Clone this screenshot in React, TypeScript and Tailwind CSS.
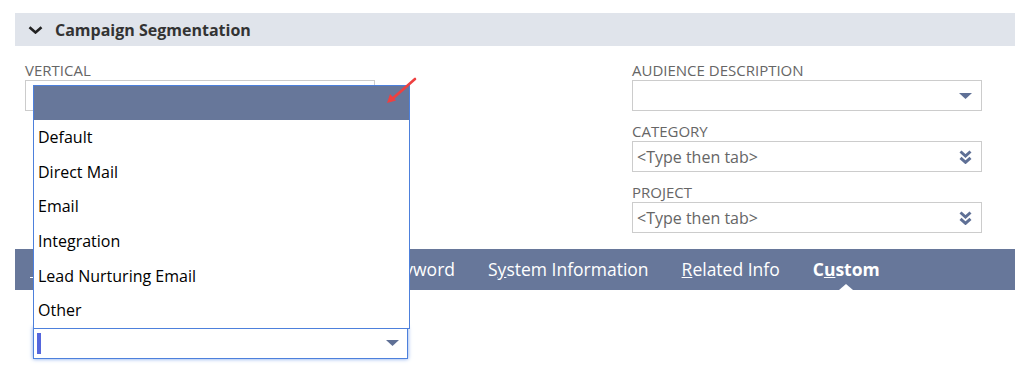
import React from 'react';

const font = "font-['Open_Sans',sans-serif]";

const Triangle = () => (
    <svg width="13" height="6" viewBox="0 0 13 6" className="shrink-0">
        <path d="M0 0 H13 L6.5 6 Z" fill="#5f7096" />
    </svg>
);

const DoubleChevron = () => (
    <svg width="13" height="14" viewBox="0 0 13 14" className="shrink-0">
        <path d="M1.5 1.5 L6.5 6 L11.5 1.5" fill="none" stroke="#5f7096" strokeWidth="3" />
        <path d="M1.5 7.8 L6.5 12.3 L11.5 7.8" fill="none" stroke="#5f7096" strokeWidth="3" />
    </svg>
);

const Field = ({ label, placeholder, icon, first }: { label: string; placeholder?: string; icon: 'tri' | 'dbl'; first?: boolean }) => (
    <div className={first ? '' : 'mt-[11px]'}>
        <div className="text-[15px] leading-[19px] text-[#666] uppercase">{label}</div>
        <div className="h-[31px] w-[350px] border border-[#cccccc] flex items-center justify-between pl-[4px] pr-[9px]">
            <span className="text-[16px] text-[#666]">{placeholder}</span>
            {icon === 'tri' ? <Triangle /> : <DoubleChevron />}
        </div>
    </div>
);

const options = ['Default', 'Direct Mail', 'Email', 'Integration', 'Lead Nurturing Email', 'Other'];

export default function App() {
    return (
        <div className={`w-[1015px] h-[378px] bg-white pt-[13px] pl-[15px] relative overflow-hidden ${font}`}>
            {/* section header */}
            <div className="h-[33px] bg-[#e0e4eb] flex items-center pl-[13px] gap-[12px]">
                <svg width="15" height="8" viewBox="0 0 15 8">
                    <path d="M1.5 1.2 L7.5 6.5 L13.5 1.2" fill="none" stroke="#222" strokeWidth="2.6" />
                </svg>
                <span className="text-[16px] font-bold text-[#333]">Campaign Segmentation</span>
            </div>

            {/* fields */}
            <div className="flex pl-[10px] pt-[15px]">
                <div className="w-[350px]">
                    <div className="text-[15px] leading-[19px] text-[#666]">VERTICAL</div>
                    <div className="h-[31px] w-[350px] border border-[#cccccc]" />
                </div>
                <div className="ml-[257px] w-[350px]">
                    <Field label="Audience Description" icon="tri" first />
                    <Field label="Category" placeholder="<Type then tab>" icon="dbl" />
                    <Field label="Project" placeholder="<Type then tab>" icon="dbl" />
                </div>
            </div>

            {/* subtabs */}
            <div className="mt-[16px] h-[41px] w-[1000px] bg-[#67779a] flex items-center text-white text-[17.5px] pl-[15px]">
                <span className="w-[6px] h-[1px] bg-white self-end mb-[12px] shrink-0" />
                <span className="shrink-0 w-[74px] text-right ml-[345px]">Keyword</span>
                <span className="shrink-0 ml-[33px]">S<span className="underline">y</span>stem Information</span>
                <span className="shrink-0 ml-[33px]"><span className="underline">R</span>elated Info</span>
                <span className="shrink-0 ml-[33px] font-bold relative h-[41px] flex items-center">
                    <span>C<span className="underline">u</span>stom</span>
                    <span className="absolute bottom-0 left-1/2 -translate-x-1/2 w-0 h-0 border-l-[7px] border-r-[7px] border-b-[6px] border-l-transparent border-r-transparent border-b-white" />
                </span>
            </div>

            {/* focused select */}
            <div className="ml-[18px] mt-[37px] h-[32px] w-[375px] border border-[#4d80dc] shadow-[0_0_4px_#7aa2e8] flex items-center justify-between pl-[3px] pr-[8px]">
                <span className="w-[4px] h-[21px] bg-[#5566dd]" />
                <Triangle />
            </div>

            {/* open dropdown list */}
            <div className="absolute left-[33px] top-[85px] w-[377px] border border-[#4d80dc] bg-white z-10">
                <div className="h-[34px] bg-[#67779a]" />
                {options.map(o => (
                    <div key={o} className="h-[34.67px] leading-[34.67px] pl-[4px] text-[16px] text-black">{o}</div>
                ))}
            </div>

            {/* annotation arrow */}
            <svg className="absolute left-[383px] top-[75px] z-20" width="36" height="32" viewBox="0 0 36 32">
                <path d="M32 4 L8 25" stroke="#ee4040" strokeWidth="2.6" strokeLinecap="round" />
                <path d="M4 28 L7 19 L13 25.5 Z" fill="#ee4040" />
            </svg>
        </div>
    );
}
